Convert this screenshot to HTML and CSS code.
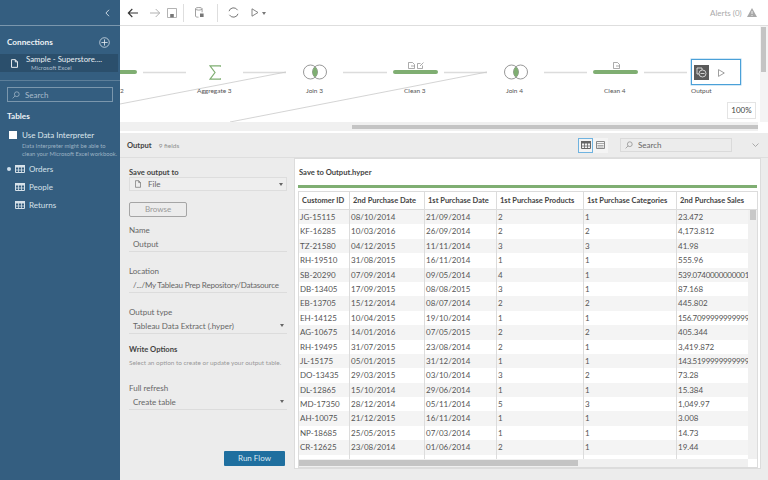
FILE: index.html
```html
<!DOCTYPE html>
<html lang="en">
<head>
<meta charset="utf-8">
<title>Tableau Prep</title>
<link rel="stylesheet" href="styles.css">
</head>
<body>
<svg class="defs" width="0" height="0">
  <symbol id="tbl" viewBox="0 0 10 8"><path d="M.5.5h9v7h-9z" fill="none" stroke="currentColor"/><path d="M0 0h10v2.5H0z" fill="currentColor"/><path d="M0 5h10M3.5 2v6M6.5 2v6" stroke="currentColor" stroke-width=".8" fill="none"/></symbol>
  <symbol id="doc" viewBox="0 0 8 10"><path d="M.6.6h4.3l2.5 2.5v6.3H.6zM4.9.6v2.500h2.500" fill="none" stroke="currentColor" stroke-width="1"/></symbol>
  <symbol id="mag" viewBox="0 0 10 10"><circle cx="6" cy="4" r="3" fill="none" stroke="currentColor" stroke-width=".9"/><path d="M3.800 6.200.8 9.200" stroke="currentColor" stroke-width=".9"/></symbol>
  <symbol id="join" viewBox="0 0 24 16"><circle cx="7.500" cy="8" r="7" fill="none" stroke="#8c8c8c" stroke-width=".9"/><circle cx="16.500" cy="8" r="7" fill="none" stroke="#8c8c8c" stroke-width=".9"/><path d="M12 2.640A7 7 0 0 1 12 13.360A7 7 0 0 1 12 2.640z" fill="#7fae72"/></symbol>
</svg>
<div class="app">
  <aside class="side">
    <div class="side-top"><svg class="chev" width="5" height="8" viewBox="0 0 5 8"><path d="M4 .8.9 4 4 7.200" fill="none" stroke="#c9d6e0"/></svg></div>
    <div class="conn-head"><span class="side-title">Connections</span>
      <svg width="11" height="11" viewBox="0 0 11 11"><circle cx="5.500" cy="5.500" r="4.800" fill="none" stroke="#d5e0e8" stroke-width=".8"/><path d="M5.500 2.400v6.200M2.400 5.500h6.200" stroke="#e8eef2" stroke-width=".8"/></svg>
    </div>
    <div class="conn-item">
      <svg class="conn-doc"><use href="#doc"/></svg>
      <div class="conn-text"><div class="conn-name">Sample - Superstore....</div><div class="conn-sub">Microsoft Excel</div></div>
    </div>
    <div class="side-rule"></div>
    <div class="side-search"><svg class="mag"><use href="#mag"/></svg><span>Search</span></div>
    <div class="side-title tables">Tables</div>
    <div class="interp"><span class="check"></span><span>Use Data Interpreter</span></div>
    <div class="interp-desc">Data Interpreter might be able to<br>clean your Microsoft Excel workbook.</div>
    <div class="tlist">
      <div class="titem"><span class="dot"></span><svg class="ticon"><use href="#tbl"/></svg>Orders</div>
      <div class="titem"><span class="dot off"></span><svg class="ticon"><use href="#tbl"/></svg>People</div>
      <div class="titem"><span class="dot off"></span><svg class="ticon"><use href="#tbl"/></svg>Returns</div>
    </div>
  </aside>
  <main class="main">
    <header class="toolbar">
      <svg class="tb back" width="12" height="10" viewBox="0 0 12 10"><path d="M11 5H1.500M5.300 1 1.300 5l4 4" fill="none" stroke="#333" stroke-width="1.100"/></svg>
      <svg class="tb fwd" width="12" height="10" viewBox="0 0 12 10"><path d="M1 5h9.500M6.700 1l4 4-4 4" fill="none" stroke="#a8a8a8" stroke-width=".9"/></svg>
      <svg class="tb save" width="10" height="10" viewBox="0 0 10 10"><path d="M.5.5h9v9h-9z" fill="none" stroke="#a0a0a0" stroke-width=".8"/><path d="M3.200 6h3.600v3.400H3.200z" fill="#777"/></svg>
      <span class="tsep sep1"></span>
      <svg class="tb db" width="9" height="11" viewBox="0 0 9 11"><ellipse cx="3.800" cy="1.800" rx="3.300" ry="1.300" fill="none" stroke="#888" stroke-width=".8"/><path d="M.5 1.800v7.400c0 .6 1.400 1 3 1M7.100 1.800v3.500" fill="none" stroke="#888" stroke-width=".8"/><path d="M5 6.500h3.600V10H5z" fill="#777"/></svg>
      <span class="tsep sep2"></span>
      <svg class="tb sync" width="11" height="11" viewBox="0 0 11 11"><path d="M1 4.200A4.700 4.700 0 0 1 9.600 3.200M10 6.800A4.700 4.700 0 0 1 1.400 7.800" fill="none" stroke="#666" stroke-width=".9"/></svg>
      <svg class="tb play" width="8" height="9" viewBox="0 0 8 9"><path d="M1 .8 7 4.500 1 8.200z" fill="none" stroke="#777" stroke-width=".9"/></svg>
      <svg class="tb caret" width="4" height="3" viewBox="0 0 4 3"><path d="M0 0h4L2 3z" fill="#777"/></svg>
      <span class="alerts">Alerts (0)</span>
      <svg class="tb warn" width="10" height="9" viewBox="0 0 10 9"><path d="M5 0 10 9H0z" fill="#a8a8a8"/><path d="M5 3v3M5 7v1" stroke="#fff" stroke-width=".8"/></svg>
    </header>
    <section class="canvas">
      <svg class="wires" width="648" height="96" viewBox="0 0 648 96">
        <path d="M23 46.500h43M123 46.500h43M223 46.500h44M324 46.500h43M424 46.500h43M524 46.500h43" stroke="#dcdcdc" stroke-width="1.600" fill="none"/>
        <path d="M0 78 166 46M110 96 367 46" stroke="#c9c9c9" stroke-width=".8" fill="none"/>
      </svg>
      <div class="node bar n-b0"></div>
      <div class="node lbl l0">2</div>
      <svg class="node sigma" width="12" height="15" viewBox="0 0 12 15"><path d="M11.500 1.800V.8H1l5 6.700-5 6.700h10.500v-1" fill="none" stroke="#7fae72" stroke-width="1.200"/></svg>
      <div class="node lbl l-agg">Aggregate 3</div>
      <svg class="node j3" width="24" height="16"><use href="#join"/></svg>
      <div class="node lbl l-j3">Join 3</div>
      <div class="node bar n-b3"></div>
      <svg class="node i3a" width="7" height="7" viewBox="0 0 7 7"><path d="M.5.5h4l2 2v4h-6zM3 4h3.500" fill="none" stroke="#888" stroke-width=".7"/></svg>
      <svg class="node i3b" width="7" height="7" viewBox="0 0 7 7"><path d="M.5 1.500h3M.5 1.500v5h5v-3M3 4l3.500-3.500" fill="none" stroke="#888" stroke-width=".7"/></svg>
      <div class="node lbl l-c3">Clean 3</div>
      <svg class="node j4" width="24" height="16"><use href="#join"/></svg>
      <div class="node lbl l-j4">Join 4</div>
      <div class="node bar n-b4"></div>
      <svg class="node i4a" width="7" height="7" viewBox="0 0 7 7"><path d="M.5.5h4l2 2v4h-6zM3 4h3.500" fill="none" stroke="#888" stroke-width=".7"/></svg>
      <div class="node lbl l-c4">Clean 4</div>
      <div class="node outbox">
        <span class="out-ico"><svg width="11" height="11" viewBox="0 0 11 11"><path d="M1 1h5v2M1 1v6h2" fill="none" stroke="#eee" stroke-width=".8"/><circle cx="6.500" cy="6.500" r="3.500" fill="none" stroke="#eee" stroke-width=".8"/><path d="M4.500 6.500h4" stroke="#eee" stroke-width=".8"/></svg></span>
        <svg class="out-play" width="7" height="8" viewBox="0 0 7 8"><path d="M.5.600 6.300 4 .5 7.400z" fill="none" stroke="#888" stroke-width=".8"/></svg>
      </div>
      <div class="node lbl l-out">Output</div>
      <div class="node zoom-box">100%</div>
      <div class="vscroll"><span></span></div>
      <div class="hscroll"><span></span></div>
    </section>
    <section class="panel">
      <div class="panel-head">
        <span class="ph-title">Output</span><span class="ph-sub">9 fields</span>
        <div class="ph-right">
          <span class="vtoggle on"><svg width="10" height="8"><use href="#tbl"/></svg></span>
          <span class="vtoggle"><svg width="9" height="8" viewBox="0 0 9 8"><path d="M.5.500h8v7h-8z" fill="none" stroke="#888"/><path d="M0 2.500h9M1.500 4.500h6M1.500 6h6" stroke="#888" stroke-width=".7"/></svg></span>
          <span class="ph-search"><svg class="mag2"><use href="#mag"/></svg>Search</span>
          <svg class="ph-chev" width="7" height="4" viewBox="0 0 7 4"><path d="M.5.500 3.500 3.500 6.500.500" fill="none" stroke="#999" stroke-width=".8"/></svg>
        </div>
      </div>
      <div class="panel-body">
        <form class="form">
          <div class="flabel strong">Save output to</div>
          <div class="select boxed"><svg class="sel-doc"><use href="#doc"/></svg><span>File</span><i class="arrow"></i></div>
          <div class="browse">Browse</div>
          <div class="flabel f-name">Name</div>
          <div class="field">Output</div>
          <div class="flabel f-loc">Location</div>
          <div class="field tight">/.../My Tableau Prep Repository/Datasource</div>
          <div class="flabel f-type">Output type</div>
          <div class="field sel">Tableau Data Extract (.hyper)<i class="arrow"></i></div>
          <div class="flabel strong f-write">Write Options</div>
          <div class="fhint">Select an option to create or update your output table.</div>
          <div class="flabel f-full">Full refresh</div>
          <div class="field sel">Create table<i class="arrow"></i></div>
          <div class="run">Run Flow</div>
        </form>
        <div class="preview">
          <div class="pv-title">Save to Output.hyper</div>
          <div class="pv-green"></div>
          <div class="grid">
            <div class="row head"><span>Customer ID</span><span>2nd Purchase Date</span><span>1st Purchase Date</span><span>1st Purchase Products</span><span>1st Purchase Categories</span><span>2nd Purchase Sales</span></div>
            <div class="rows">
              <div class="row"><span>JG-15115</span><span>08/10/2014</span><span>21/09/2014</span><span>2</span><span>1</span><span>23.472</span></div>
              <div class="row"><span>KF-16285</span><span>10/03/2016</span><span>26/09/2014</span><span>2</span><span>2</span><span>4,173.812</span></div>
              <div class="row"><span>TZ-21580</span><span>04/12/2015</span><span>11/11/2014</span><span>3</span><span>3</span><span>41.98</span></div>
              <div class="row"><span>RH-19510</span><span>31/08/2015</span><span>16/11/2014</span><span>1</span><span>1</span><span>555.96</span></div>
              <div class="row"><span>SB-20290</span><span>07/09/2014</span><span>09/05/2014</span><span>4</span><span>1</span><span class="long">539.0740000000001</span></div>
              <div class="row"><span>DB-13405</span><span>17/09/2015</span><span>08/08/2015</span><span>3</span><span>1</span><span>87.168</span></div>
              <div class="row"><span>EB-13705</span><span>15/12/2014</span><span>08/07/2014</span><span>2</span><span>2</span><span>445.802</span></div>
              <div class="row"><span>EH-14125</span><span>10/04/2015</span><span>19/10/2014</span><span>1</span><span>1</span><span class="long">156.7099999999999</span></div>
              <div class="row"><span>AG-10675</span><span>14/01/2016</span><span>07/05/2015</span><span>2</span><span>2</span><span>405.344</span></div>
              <div class="row"><span>RH-19495</span><span>31/07/2015</span><span>23/08/2014</span><span>2</span><span>1</span><span>3,419.872</span></div>
              <div class="row"><span>JL-15175</span><span>05/01/2015</span><span>31/12/2014</span><span>1</span><span>1</span><span class="long">143.5199999999999</span></div>
              <div class="row"><span>DO-13435</span><span>29/03/2015</span><span>03/10/2014</span><span>3</span><span>2</span><span>73.28</span></div>
              <div class="row"><span>DL-12865</span><span>15/10/2014</span><span>29/06/2014</span><span>1</span><span>1</span><span>15.384</span></div>
              <div class="row"><span>MD-17350</span><span>28/12/2014</span><span>05/11/2014</span><span>5</span><span>3</span><span>1,049.97</span></div>
              <div class="row"><span>AH-10075</span><span>21/12/2015</span><span>16/11/2014</span><span>1</span><span>1</span><span>3.008</span></div>
              <div class="row"><span>NP-18685</span><span>25/05/2015</span><span>07/03/2014</span><span>1</span><span>1</span><span>14.73</span></div>
              <div class="row"><span>CR-12625</span><span>23/08/2014</span><span>01/06/2014</span><span>2</span><span>1</span><span>19.44</span></div>
              <div class="row tail"><span></span><span></span><span></span><span></span><span></span><span></span></div>
            </div>
            <div class="g-vthumb"></div>
            <div class="g-hbar"><span></span><i></i></div>
          </div>
        </div>
      </div>
    </section>
  </main>
</div>
</body>
</html>
```

FILE: styles.css
```css
* { box-sizing: border-box; }
html, body { margin: 0; height: 100%; overflow: hidden; }
body { font-family: "Lato", "Open Sans", sans-serif; font-size: 8px; color: #555; background: #ececec; }
.defs { position: absolute; }
.app { display: grid; grid-template-columns: 120px 1fr; width: 768px; height: 480px; }

/* sidebar */
.side { background: #345e80; color: #e6edf2; display: flex; flex-direction: column; }
.side-top { height: 26px; border-bottom: 1px solid #7b97ad; display: flex; align-items: center; justify-content: flex-end; padding-right: 10px; }
.conn-head { display: flex; justify-content: space-between; align-items: center; height: 28px; padding: 4px 10px 0 7px; }
.side-title { font-weight: 700; font-size: 8.2px; color: #eef3f6; }
.conn-item { width: 118px; height: 18px; background: #2b4f6c; display: flex; align-items: center; padding-left: 11px; }
.conn-doc { width: 7px; height: 9px; color: #fff; flex: none; }
.conn-text { margin-left: 8px; }
.conn-name { font-size: 7.8px; line-height: 9px; color: #e8eef2; }
.conn-sub { font-size: 6px; line-height: 7px; color: #a9bccb; margin-left: 5px; }
.side-rule { height: 1px; background: #5d7f9a; margin-top: 8px; }
.side-search { margin: 6px 7px 0; width: 106px; height: 15px; border: 1px solid #7b97ad; display: flex; align-items: center; padding-left: 4px; color: #a9bccb; font-size: 8px; }
.mag { width: 8px; height: 8px; color: #a9bccb; margin-right: 5px; }
.tables { margin: 9px 0 0 7px; line-height: 10px; }
.interp { display: flex; align-items: center; margin: 9px 0 0 9px; height: 10px; font-size: 8px; color: #dde6ec; }
.check { width: 8px; height: 8px; background: #fff; margin-right: 5px; }
.interp-desc { margin: 2px 0 0 22px; font-size: 5.8px; line-height: 7.5px; color: #9cb2c3; white-space: nowrap; }
.tlist { margin-top: 7px; display: flex; flex-direction: column; gap: 8px; }
.titem { display: flex; align-items: center; height: 10px; color: #d6e1e9; font-size: 8px; }
.dot { width: 4px; height: 4px; border-radius: 50%; background: #cfe0ec; margin: 0 4px 0 7px; }
.dot.off { background: transparent; }
.ticon { width: 10px; height: 8px; color: #d6e1e9; margin-right: 4px; }

/* main */
.main { display: flex; flex-direction: column; min-width: 0; }
.toolbar { height: 26px; background: #fff; border-bottom: 1px solid #dedede; position: relative; flex: none; }
.tb { position: absolute; }
.back { left: 7px; top: 8px; }
.fwd { left: 29px; top: 8px; }
.save { left: 47px; top: 8px; }
.db { left: 75px; top: 7px; }
.sync { left: 108px; top: 7px; }
.play { left: 131px; top: 8px; }
.caret { left: 142px; top: 12px; }
.warn { left: 627px; top: 8px; }
.tsep { position: absolute; top: 4px; width: 1px; height: 18px; background: #dedede; }
.sep1 { left: 63px; }
.sep2 { left: 97px; }
.alerts { position: absolute; left: 590px; top: 8px; font-size: 8px; line-height: 10px; color: #aaa; }

.canvas { position: relative; height: 105px; background: #fff; flex: none; overflow: hidden; }
.wires { position: absolute; left: 0; top: 0; }
.node { position: absolute; }
.bar { height: 4px; top: 44px; background: #7fae72; border-radius: 2px; }
.n-b0 { left: 0; width: 17px; border-radius: 0 2px 2px 0; }
.n-b3 { left: 273px; width: 45px; }
.n-b4 { left: 473px; width: 45px; }
.lbl { font-size: 6.5px; line-height: 8px; color: #555; top: 61px; white-space: nowrap; }
.l0 { left: 0; }
.l-agg { left: 77px; }
.l-j3 { left: 186px; }
.l-c3 { left: 284px; }
.l-j4 { left: 386px; }
.l-c4 { left: 484px; }
.l-out { left: 571px; }
.sigma { left: 89px; top: 39px; }
.j3 { left: 183px; top: 38px; }
.j4 { left: 384px; top: 38px; }
.i3a { left: 288px; top: 36px; }
.i3b { left: 297px; top: 36px; }
.i4a { left: 493px; top: 36px; }
.outbox { left: 571px; top: 33px; width: 50px; height: 26px; border: 1px solid #4aa0d8; box-shadow: 0 0 0 .5px #a8d2ee; background: #fff; }
.out-ico { position: absolute; left: 2px; top: 5px; width: 15px; height: 15px; background: #5a5a5a; display: flex; align-items: center; justify-content: center; }
.out-play { position: absolute; left: 26px; top: 9px; }
.zoom-box { left: 607px; top: 76px; width: 29px; height: 17px; background: #fff; border: 1px solid #e4e4e4; font-size: 8px; line-height: 15px; text-align: center; color: #444; }
.vscroll { position: absolute; right: 0; top: 0; width: 8px; height: 96px; background: #f4f4f4; }
.vscroll span { position: absolute; left: 1px; top: 1px; width: 5px; height: 45px; background: #c4c4c4; }
.hscroll { position: absolute; left: 0; top: 96px; width: 638px; height: 9px; background: #f0f0f0; }
.hscroll span { position: absolute; left: 232px; top: 3px; width: 406px; height: 4px; background: #c4c4c4; }

.panel { flex: 1; display: flex; flex-direction: column; min-height: 0; background: #ececec; }
.panel-head { height: 27px; flex: none; display: flex; align-items: center; padding-left: 7px; border-top: 2px solid #fff; border-bottom: 1px solid #dedede; background: #ececec; position: relative; }
.ph-title { font-weight: 700; font-size: 7.6px; color: #444; }
.ph-sub { font-size: 6.5px; color: #8f8f8f; margin-left: 7px; }
.ph-right { margin-left: auto; display: flex; align-items: center; padding-right: 9px; }
.vtoggle { width: 15px; height: 15px; display: flex; align-items: center; justify-content: center; background: #f4f4f4; color: #777; }
.vtoggle.on { border: 1px solid #6fb3e0; color: #666; }
.ph-search { width: 112px; height: 14px; margin-left: 12px; background: #ececec; border: 1px solid #dadada; color: #666; font-size: 8px; display: flex; align-items: center; padding-left: 4px; }
.mag2 { width: 8px; height: 8px; color: #888; margin-right: 5px; }
.ph-chev { margin-left: 20px; }

.panel-body { flex: 1; display: flex; min-height: 0; }
.form { width: 174px; flex: none; padding: 9px 7px 0 9px; display: flex; flex-direction: column; position: relative; }
.flabel { font-size: 8px; line-height: 10px; color: #666; }
.flabel.strong { font-size: 7.6px; font-weight: 700; color: #444; }
.select.boxed { height: 14px; margin-top: 0; background: #eee; border: 1px solid #ddd; display: flex; align-items: center; padding-left: 5px; color: #666; position: relative; }
.sel-doc { width: 6px; height: 8px; color: #777; margin-right: 7px; }
.arrow { position: absolute; right: 3px; top: 5px; width: 0; height: 0; border: 2.5px solid transparent; border-top: 3px solid #666; border-bottom: 0; }
.browse { width: 58px; height: 15px; margin-top: 11px; border: 1px solid #a5a5a5; border-radius: 2px; text-align: center; line-height: 13px; color: #999; }
.field { height: 15px; line-height: 14px; padding-left: 4px; border-bottom: 1px solid #dcdcdc; color: #666; position: relative; white-space: nowrap; overflow: hidden; margin-top: 2px; }
.field.tight { letter-spacing: -.2px; }
.flabel.f-name { margin-top: 8px; }
.flabel.f-loc { margin-top: 14px; }
.flabel.f-type { margin-top: 14px; }
.flabel.f-write { margin-top: 10px; }
.fhint { font-size: 6.4px; line-height: 8px; color: #999; margin-top: 5px; white-space: nowrap; }
.flabel.f-full { margin-top: 16px; }
.run { position: absolute; left: 104px; top: 293px; width: 61px; height: 15px; background: #1f6f9f; border-radius: 1px; color: #dbe9f2; text-align: center; line-height: 15px; font-size: 8px; }

.preview { width: 467px; height: 311px; background: #fff; border: 1px solid #dcdcdc; padding: 0 3px; display: flex; flex-direction: column; }
.pv-title { height: 26px; line-height: 26px; font-weight: 700; color: #444; font-size: 7.6px; flex: none; padding-left: 1px; }
.pv-green { height: 3px; background: #7fae72; flex: none; }
.grid { position: relative; margin-top: 3px; height: 277px; width: 460px; border: 1px solid #dcdcdc; overflow: hidden; background: #f0f0f0; }
.row { display: grid; grid-template-columns: 51px 75px 72px 87px 93px 1fr; height: 14.4px; width: 449px; background: #fff; }
.row span { display: block; padding-left: 1px; line-height: 15.4px; color: #555; font-size: 8px; white-space: nowrap; overflow: hidden; border-right: 1px solid #dcdcdc; }
.row span:last-child { border-right: 0; }
.row span.long { letter-spacing: -.3px; }
.rows .row:nth-child(odd) { background: #f4f4f4; }
.rows .tail { height: 9px; background: #fff; }
.row.head { height: 18px; width: 458px; border-bottom: 1px solid #dcdcdc; grid-template-columns: 51px 75px 72px 87px 93px 1fr; }
.row.head span { font-weight: 700; font-size: 7.5px; color: #444; line-height: 17px; padding-left: 3px; }
.g-vthumb { position: absolute; right: 1px; top: 18px; width: 6px; height: 10px; background: #c8c8c8; }
.g-hbar { position: absolute; left: 0; bottom: 0; width: 100%; height: 8px; background: #f0f0f0; }
.g-hbar span { position: absolute; left: 0; top: 1px; width: 279px; height: 6px; background: #c4c4c4; }
.g-hbar i { position: absolute; right: 0; top: 0; width: 9px; height: 8px; background: #fff; }
```
